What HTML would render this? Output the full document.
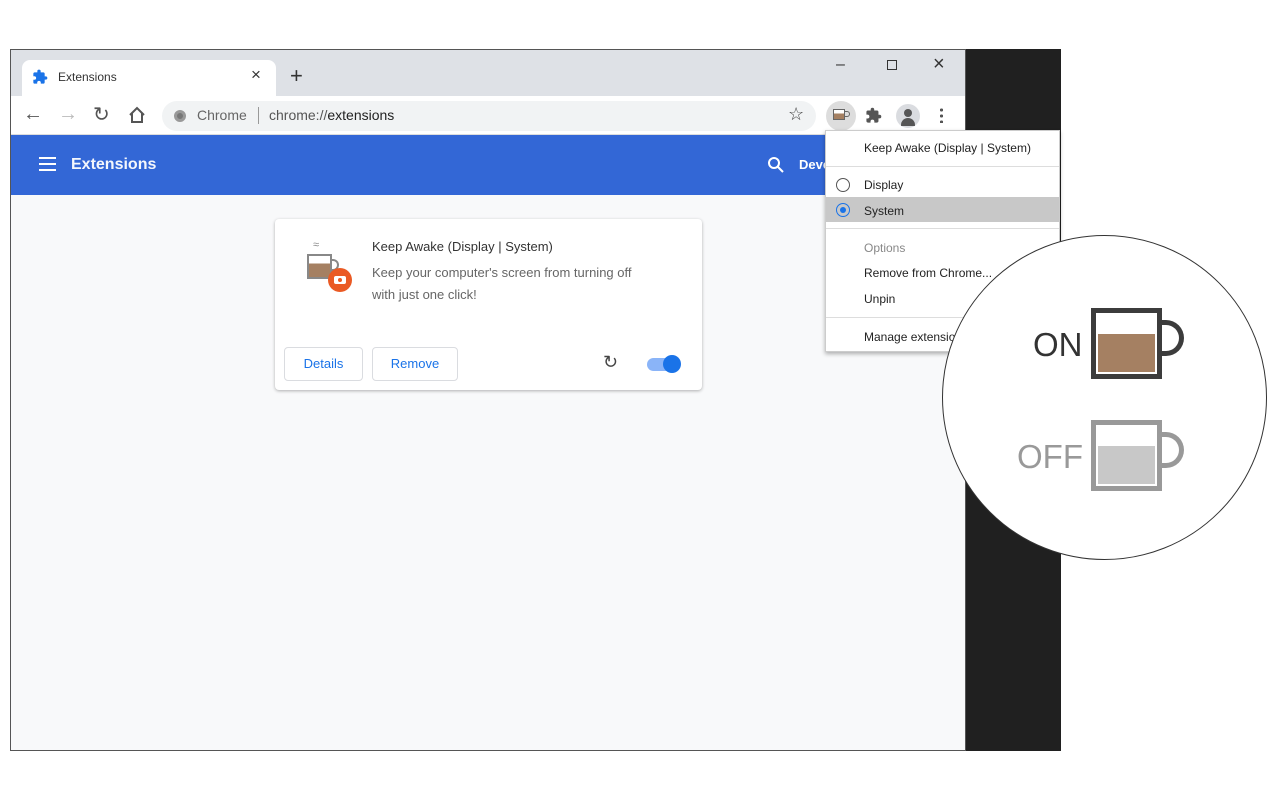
<!DOCTYPE html>
<html><head><meta charset="utf-8"><style>
*{margin:0;padding:0;box-sizing:border-box}
body{width:1280px;height:800px;background:#fff;position:relative;overflow:hidden;font-family:"Liberation Sans",sans-serif}
.abs{position:absolute}
</style></head><body>
<div class="abs" style="left:965px;top:49px;width:96px;height:702px;background:#202020"></div>
<div class="abs" style="left:10px;top:49px;width:956px;height:702px;border:1px solid #555;background:#f8f9fa;overflow:hidden">
 <div class="abs" style="left:0;top:0;width:956px;height:46px;background:#dee1e6"></div>
 <div class="abs" style="left:11px;top:10px;width:254px;height:36px;background:#fff;border-radius:8px 8px 0 0"></div>
 <svg class="abs" style="left:21px;top:19px" width="16" height="16" viewBox="0 0 24 24"><path fill="#1a73e8" d="M20.5 11H19V7c0-1.1-.9-2-2-2h-4V3.5a2.5 2.5 0 0 0-5 0V5H4c-1.1 0-2 .9-2 2v3.8h1.5a2.7 2.7 0 0 1 0 5.4H2V20c0 1.1.9 2 2 2h3.8v-1.5a2.7 2.7 0 0 1 5.4 0V22H17c1.1 0 2-.9 2-2v-4h1.5a2.5 2.5 0 0 0 0-5z"/></svg>
 <div class="abs" style="left:47px;top:20px;font-size:12px;color:#333">Extensions</div>
 <div class="abs" style="left:240px;top:15px;font-size:17px;color:#333">×</div>
 <div class="abs" style="left:279px;top:13px;font-size:22px;color:#333">+</div>
 <div class="abs" style="left:825px;top:6px;font-size:16px;color:#333">–</div>
 <div class="abs" style="left:876px;top:10px;width:10px;height:10px;border:1.5px solid #333"></div>
 <div class="abs" style="left:922px;top:3px;font-size:20px;color:#333">×</div>
 <div class="abs" style="left:0;top:46px;width:956px;height:39px;background:#fff;border-bottom:1px solid #ddd"></div>
 <div class="abs" style="left:12px;top:53px;font-size:20px;color:#555">←</div>
 <div class="abs" style="left:47px;top:53px;font-size:20px;color:#bbb">→</div>
 <div class="abs" style="left:82px;top:52px;font-size:20px;color:#555">↻</div>
 <svg class="abs" style="left:117px;top:56px" width="18" height="18" viewBox="0 0 18 18"><path d="M2 9L9 2l7 7M4 7v9h10V7" fill="none" stroke="#555" stroke-width="2"/></svg>
 <div class="abs" style="left:151px;top:51px;width:654px;height:30px;background:#f1f3f4;border-radius:15px"></div>
 <div class="abs" style="left:163px;top:60px;width:12px;height:12px;border-radius:50%;background:#777;border:3px solid #999"></div>
 <div class="abs" style="left:186px;top:57px;font-size:14px;color:#666">Chrome</div>
 <div class="abs" style="left:247px;top:57px;width:1px;height:17px;background:#999"></div>
 <div class="abs" style="left:258px;top:57px;font-size:14px;color:#555">chrome://<span style="color:#222">extensions</span></div>
 <div class="abs" style="left:777px;top:54px;font-size:18px;color:#444">☆</div>
 <div class="abs" style="left:815px;top:51px;width:30px;height:30px;border-radius:50%;background:#ddd"></div>
 <div class="abs" style="left:822px;top:59px;width:12px;height:11px;border:1.5px solid #666;background:linear-gradient(#fff 40%,#a58062 40%)"></div>
 <div class="abs" style="left:834px;top:61px;width:5px;height:6px;border:1.5px solid #666;border-left:none;border-radius:0 3px 3px 0"></div>
 <svg class="abs" style="left:854px;top:57px" width="17" height="17" viewBox="0 0 24 24"><path fill="#555" d="M20.5 11H19V7c0-1.1-.9-2-2-2h-4V3.5a2.5 2.5 0 0 0-5 0V5H4c-1.1 0-2 .9-2 2v3.8h1.5a2.7 2.7 0 0 1 0 5.4H2V20c0 1.1.9 2 2 2h3.8v-1.5a2.7 2.7 0 0 1 5.4 0V22H17c1.1 0 2-.9 2-2v-4h1.5a2.5 2.5 0 0 0 0-5z"/></svg>
 <div class="abs" style="left:885px;top:54px;width:24px;height:24px;border-radius:50%;background:#dadce0;overflow:hidden"><div class="abs" style="left:8px;top:5px;width:8px;height:8px;border-radius:50%;background:#555"></div><div class="abs" style="left:5px;top:14px;width:14px;height:8px;border-radius:7px 7px 0 0;background:#555"></div></div>
 <div class="abs" style="left:929px;top:57px;width:3px;height:16px;background:radial-gradient(circle,#555 1.5px,transparent 1.6px) 0 0/3px 6px"></div>
 <div class="abs" style="left:0;top:85px;width:956px;height:60px;background:#3367d6"></div>
 <div class="abs" style="left:28px;top:107px;width:17px;height:14px;border-top:2px solid #fff;border-bottom:2px solid #fff"><div style="margin-top:4px;height:2px;background:#fff"></div></div>
 <div class="abs" style="left:60px;top:106px;font-size:16px;color:#fff;font-weight:bold;opacity:.95">Extensions</div>
 <svg class="abs" style="left:756px;top:106px" width="18" height="18" viewBox="0 0 18 18"><circle cx="7" cy="7" r="5" fill="none" stroke="#fff" stroke-width="2"/><path d="M11 11l5 5" stroke="#fff" stroke-width="2"/></svg>
 <div class="abs" style="left:788px;top:107px;font-size:13px;color:#fff;font-weight:bold">Deve</div>
 <div class="abs" style="left:264px;top:169px;width:427px;height:171px;background:#fff;border-radius:4px;box-shadow:0 1px 3px rgba(0,0,0,.3)">
  <div class="abs" style="left:32px;top:35px;width:25px;height:25px;border:2px solid #888;background:linear-gradient(#fff 35%,#a58062 35%)"></div>
  <div class="abs" style="left:56px;top:40px;width:8px;height:12px;border:2px solid #888;border-left:none;border-radius:0 6px 6px 0"></div>
  <div class="abs" style="left:38px;top:20px;font-size:11px;color:#888">≈</div>
  <div class="abs" style="left:53px;top:49px;width:24px;height:24px;border-radius:50%;background:#ea5a24"><div class="abs" style="left:6px;top:8px;width:12px;height:8px;border-radius:2px;background:#fff"></div><div class="abs" style="left:10px;top:10px;width:4px;height:4px;border-radius:50%;background:#ea5a24"></div></div>
  <div class="abs" style="left:97px;top:20px;font-size:13px;color:#333">Keep Awake (Display | System)</div>
  <div class="abs" style="left:97px;top:43px;font-size:13px;color:#666;line-height:22px;width:285px">Keep your computer's screen from turning off with just one click!</div>
  <div class="abs" style="left:9px;top:128px;width:79px;height:34px;border:1px solid #dadce0;border-radius:4px;color:#1a73e8;font-size:13px;text-align:center;line-height:32px">Details</div>
  <div class="abs" style="left:97px;top:128px;width:86px;height:34px;border:1px solid #dadce0;border-radius:4px;color:#1a73e8;font-size:13px;text-align:center;line-height:32px">Remove</div>
  <div class="abs" style="left:328px;top:133px;font-size:18px;color:#444">↻</div>
  <div class="abs" style="left:372px;top:139px;width:30px;height:13px;border-radius:7px;background:#8ab4f8"></div>
  <div class="abs" style="left:388px;top:136px;width:18px;height:18px;border-radius:50%;background:#1a73e8"></div>
 </div>
</div>
<div class="abs" style="left:825px;top:130px;width:235px;height:222px;background:#fff;border:1px solid #ccc;box-shadow:0 2px 4px rgba(0,0,0,.3);font-size:12px;color:#222">
 <div class="abs" style="left:38px;top:10px">Keep Awake (Display | System)</div>
 <div class="abs" style="left:0;top:35px;width:233px;height:1px;background:#ddd"></div>
 <div class="abs" style="left:10px;top:47px;width:14px;height:14px;border-radius:50%;border:1.5px solid #555"></div>
 <div class="abs" style="left:38px;top:47px">Display</div>
 <div class="abs" style="left:0;top:66px;width:233px;height:25px;background:#c8c8c8"></div>
 <div class="abs" style="left:10px;top:72px;width:14px;height:14px;border-radius:50%;border:1.5px solid #1a73e8"><div style="margin:2.5px;width:6px;height:6px;border-radius:50%;background:#1a73e8"></div></div>
 <div class="abs" style="left:38px;top:73px">System</div>
 <div class="abs" style="left:0;top:97px;width:233px;height:1px;background:#ddd"></div>
 <div class="abs" style="left:38px;top:110px;color:#888">Options</div>
 <div class="abs" style="left:38px;top:135px">Remove from Chrome...</div>
 <div class="abs" style="left:38px;top:161px">Unpin</div>
 <div class="abs" style="left:0;top:186px;width:233px;height:1px;background:#ddd"></div>
 <div class="abs" style="left:38px;top:199px">Manage extensions</div>
</div>
<div class="abs" style="left:942px;top:235px;width:325px;height:325px;border-radius:50%;background:#fff;border:1px solid #333"></div>
<div class="abs" style="left:1033px;top:326px;font-size:33px;color:#333">ON</div>
<div class="abs" style="left:1091px;top:308px;width:71px;height:71px;border:5px solid #3c3c3c;padding:2px"><div style="margin-top:19px;height:38px;background:#a58062"></div></div>
<div class="abs" style="left:1158px;top:320px;width:26px;height:36px;border:5px solid #3c3c3c;border-left:none;border-radius:0 18px 18px 0"></div>
<div class="abs" style="left:1017px;top:438px;font-size:33px;color:#999">OFF</div>
<div class="abs" style="left:1091px;top:420px;width:71px;height:71px;border:5px solid #999;padding:2px"><div style="margin-top:19px;height:38px;background:#c8c8c8"></div></div>
<div class="abs" style="left:1158px;top:432px;width:26px;height:36px;border:5px solid #999;border-left:none;border-radius:0 18px 18px 0"></div>
</body></html>
